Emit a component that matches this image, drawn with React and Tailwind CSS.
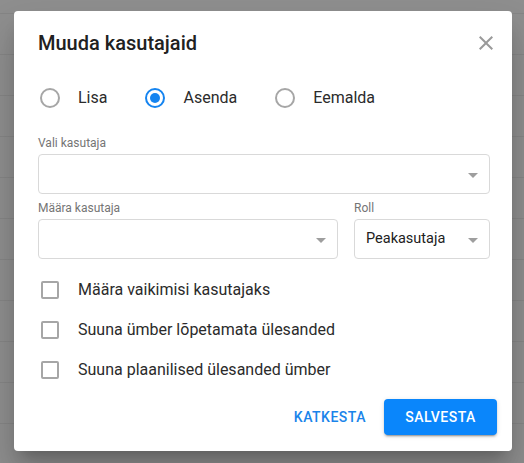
import { useState } from 'react';

const rows = Array.from({ length: 12 });

function Caret({ className = '' }) {
  return (
    <svg width="10" height="5" viewBox="0 0 10 5" className={className}>
      <path d="M0 0 L10 0 L5 5 Z" fill="#9e9e9e" />
    </svg>
  );
}

function Select({ value, className = '' }) {
  return (
    <div
      className={`flex h-10 items-center justify-between rounded-[4px] border border-[#d9d9d9] pl-[11px] pr-[11px] ${className}`}
    >
      <span className="text-[14.5px] text-[#212121]">{value}</span>
      <Caret className="mt-[3px]" />
    </div>
  );
}

function Radio({ label, checked, onClick }) {
  return (
    <button type="button" onClick={onClick} className="flex items-center">
      <span
        className={`ml-[2px] flex h-5 w-5 items-center justify-center rounded-full border-2 ${
          checked ? 'border-[#1584f0]' : 'border-[#a6a6a6]'
        }`}
      >
        {checked && <span className="h-[10px] w-[10px] rounded-full bg-[#1584f0]" />}
      </span>
      <span className="ml-[18px] text-[16px] text-[#2b2b2b]">{label}</span>
    </button>
  );
}

function Check({ label }) {
  const [on, setOn] = useState(false);
  return (
    <button type="button" onClick={() => setOn(!on)} className="flex h-10 items-center">
      <span
        className={`ml-[3px] h-[18px] w-[18px] rounded-[2px] border-2 ${
          on ? 'border-[#1584f0] bg-[#1584f0]' : 'border-[#a6a6a6]'
        }`}
      />
      <span className="ml-[19px] text-[16px] text-[#2b2b2b]">{label}</span>
    </button>
  );
}

export default function App() {
  const [mode, setMode] = useState('asenda');

  return (
    <div className="relative h-[463px] w-[524px] overflow-hidden bg-[#8e8e8e] font-['Roboto',sans-serif]">
      <div className="flex flex-col pt-[13px]">
        {rows.map((_, i) => (
          <div key={i} className="h-[41px] border-t border-[#858585]" />
        ))}
      </div>

      <div className="absolute left-[14px] top-[11px] flex h-[440px] w-[498px] flex-col rounded-[4px] bg-white pl-6 pr-[22px] pt-4 shadow-[0_11px_15px_-7px_rgba(0,0,0,0.25),0_24px_38px_3px_rgba(0,0,0,0.16)]">
        <button type="button" className="absolute right-[14px] top-[20px]" aria-label="Sulge">
          <svg width="24" height="24" viewBox="0 0 24 24">
            <path
              d="M19 6.41 17.59 5 12 10.59 6.41 5 5 6.41 10.59 12 5 17.59 6.41 19 12 13.41 17.59 19 19 17.59 13.41 12z"
              fill="#9a9a9a"
            />
          </svg>
        </button>

        <h2 className="h-8 text-[20px] font-medium leading-8 text-[#212121]">Muuda kasutajaid</h2>

        <div className="mt-[19px] flex h-10 items-center gap-[36px]">
          <Radio label="Lisa" checked={mode === 'lisa'} onClick={() => setMode('lisa')} />
          <Radio label="Asenda" checked={mode === 'asenda'} onClick={() => setMode('asenda')} />
          <Radio label="Eemalda" checked={mode === 'eemalda'} onClick={() => setMode('eemalda')} />
        </div>

        <label className="mt-[17px] block text-[12px] leading-4 text-[#757575]">Vali kasutaja</label>
        <Select value="" className="mt-[3px]" />

        <div className="mt-[6px] flex gap-[16px]">
          <div className="flex flex-1 flex-col">
            <label className="text-[12px] leading-4 text-[#757575]">Määra kasutaja</label>
            <Select value="" className="mt-[3px]" />
          </div>
          <div className="flex w-[136px] flex-col">
            <label className="text-[12px] leading-4 text-[#757575]">Roll</label>
            <Select value="Peakasutaja" className="mt-[3px]" />
          </div>
        </div>

        <div className="mt-[11px] flex flex-col">
          <Check label="Määra vaikimisi kasutajaks" />
          <Check label="Suuna ümber lõpetamata ülesanded" />
          <Check label="Suuna plaanilised ülesanded ümber" />
        </div>

        <div className="-mr-[7px] mt-[9px] flex justify-end gap-[2px]">
          <button
            type="button"
            className="h-9 rounded-[4px] px-4 text-[14px] font-medium tracking-[0.5px] text-[#1a84ea]"
          >
            KATKESTA
          </button>
          <button
            type="button"
            className="h-9 w-[113px] rounded-[4px] bg-[#0a86fb] text-[14px] font-medium tracking-[0.5px] text-white shadow-[0_3px_1px_-2px_rgba(0,0,0,0.2),0_2px_2px_0_rgba(0,0,0,0.14),0_1px_5px_0_rgba(0,0,0,0.12)]"
          >
            SALVESTA
          </button>
        </div>
      </div>
    </div>
  );
}
